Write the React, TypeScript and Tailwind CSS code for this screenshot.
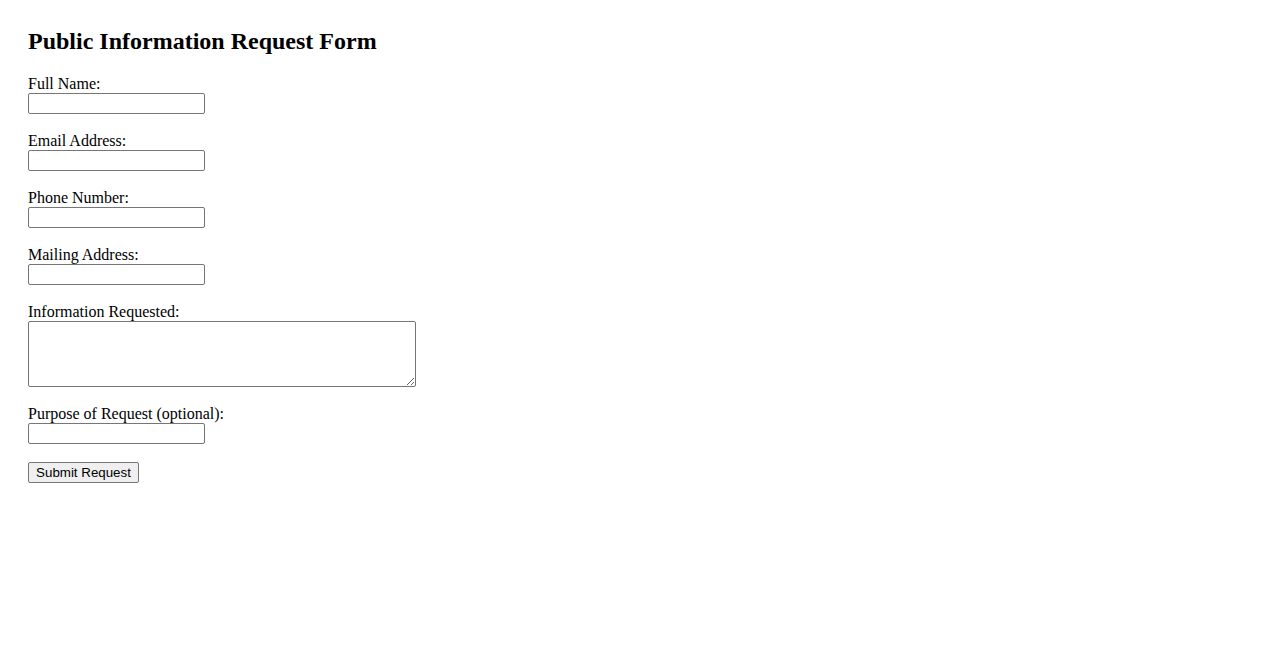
const fields = [
  { label: "Full Name:", type: "text" },
  { label: "Email Address:", type: "email" },
  { label: "Phone Number:", type: "tel" },
  { label: "Mailing Address:", type: "text" },
];

export default function App() {
  return (
    <div className="min-h-[650px] bg-white pl-[28px] pt-[28px] text-black font-['Liberation_Serif',serif]">
      <h2 className="mb-[20px] text-[24px] font-bold leading-[27px]">
        Public Information Request Form
      </h2>

      <form onSubmit={(e) => e.preventDefault()}>
        {fields.map((f, idx) => (
          <div key={idx} className="mb-[18px]">
            <label className="block text-[16px] leading-[18px]">{f.label}</label>
            <input
              type={f.type}
              className="block h-[21px] w-[177px] rounded-[2px] border border-[#767676] bg-white px-[2px] text-[13px]"
            />
          </div>
        ))}

        <div className="mb-[18px]">
          <label className="block text-[16px] leading-[18px]">Information Requested:</label>
          <textarea className="block h-[66px] w-[388px] rounded-[2px] border border-[#767676] bg-white p-[2px] text-[13px]" />
        </div>

        <div className="mb-[18px]">
          <label className="block text-[16px] leading-[18px]">Purpose of Request (optional):</label>
          <input
            type="text"
            className="block h-[21px] w-[177px] rounded-[2px] border border-[#767676] bg-white px-[2px] text-[13px]"
          />
        </div>

        <button
          type="submit"
          className="block h-[21px] w-[111px] rounded-[2px] border border-[#767676] bg-[#efefef] px-[6px] text-[13.33px] leading-[17px] font-['Liberation_Sans',Arial,sans-serif]"
        >
          Submit Request
        </button>
      </form>
    </div>
  );
}
